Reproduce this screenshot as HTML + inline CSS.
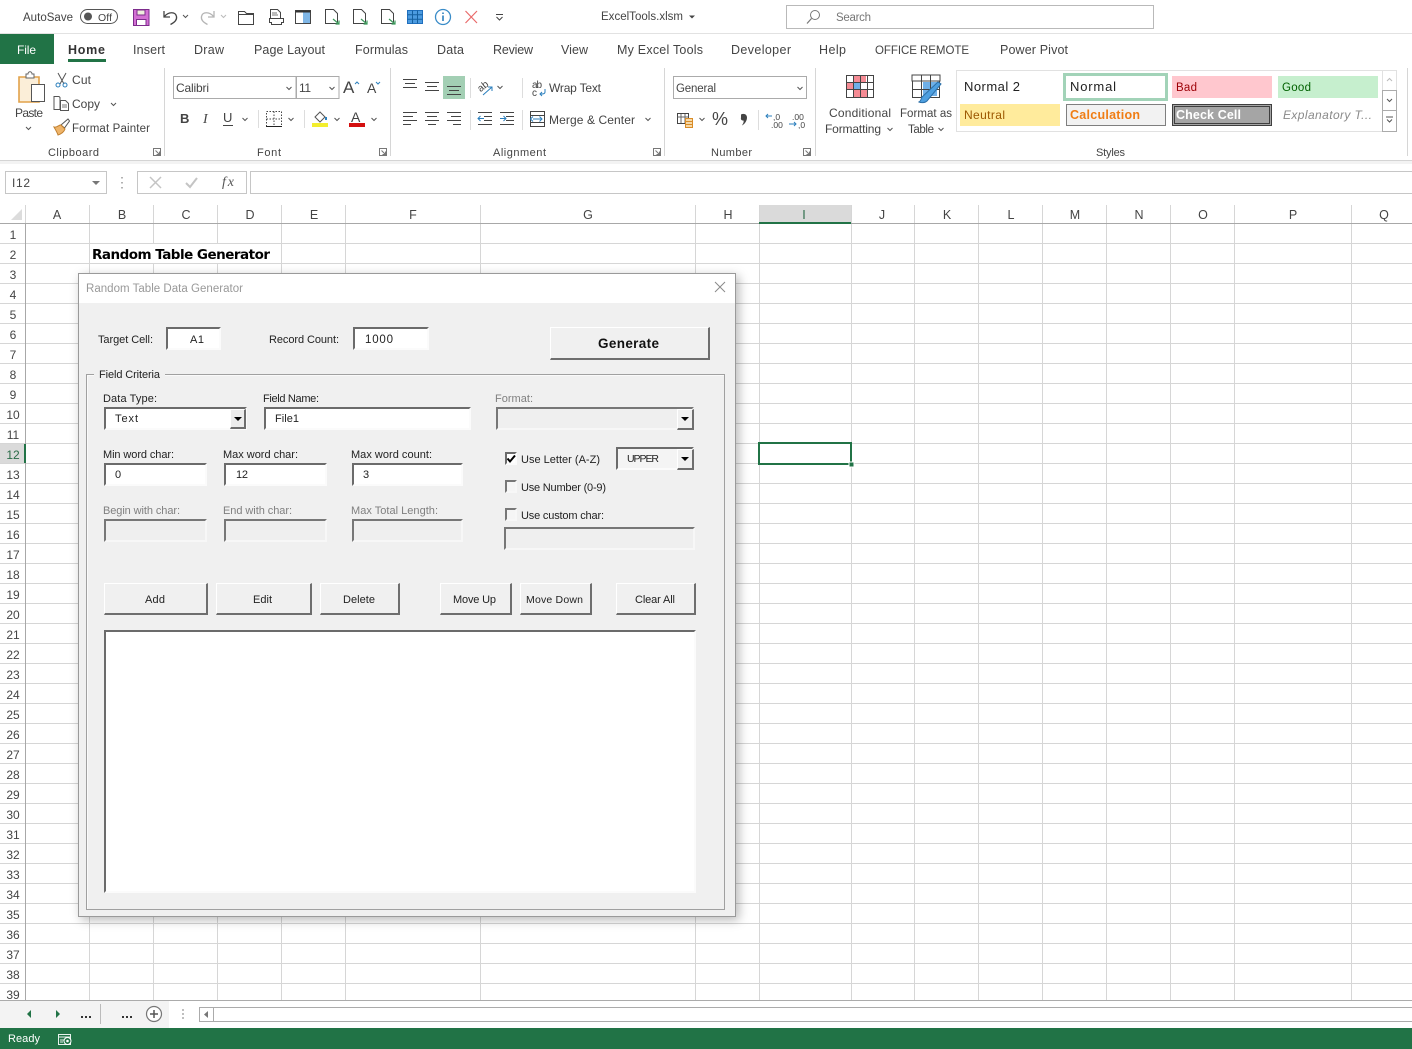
<!DOCTYPE html>
<html lang="en"><head><meta charset="utf-8"><title>ExcelTools.xlsm</title>
<style>
html,body{margin:0;padding:0;background:#fff;width:1412px;height:1049px;overflow:hidden}
#p{position:relative;width:1412px;height:1049px;overflow:hidden}
svg{position:absolute;left:0;top:0}
text{font-family:"Liberation Sans",sans-serif;font-size:12px;fill:#444}
.h text{fill:#444;font-size:12.5px}
.d text{font-size:11px;fill:#222}
.g{fill:#808080!important}
.c{fill:none;stroke:#555;stroke-width:1}
.l{fill:none;stroke:#444;stroke-width:1}
.b{position:absolute;box-sizing:border-box}
.s{border:2px solid;border-color:#6b6b6b #fbfbfb #fbfbfb #6b6b6b;background:#fff}
.x{border:2px solid;border-color:#777 #f7f7f7 #f7f7f7 #777;background:#efefef}
.r{border:1px solid #fff;border-right:2px solid #6e6e6e;border-bottom:2px solid #6e6e6e;background:#f0f0f0}
</style></head><body><div id="p">
<svg width="1412" height="1049" viewBox="0 0 1412 1049">
<!-- title bar -->
<text x="23" y="21" textLength="50" style="font-size:11.500px">AutoSave</text>
<rect x="80.500" y="9.500" width="37" height="14" rx="7" fill="#fff" stroke="#555"/><circle cx="88" cy="16.500" r="4" fill="#555"/>
<text x="98" y="21" textLength="14" style="font-size:10.500px">Off</text>
<path d="M133.500 9.500h15.500v16h-15.500z" fill="#d36fd3" stroke="#7d2c8c"/><path d="M137 10h8v5h-8z" fill="#eed" stroke="#7d2c8c"/><path d="M136.500 19.500h9.500v6h-9.500z" fill="#fff" stroke="#7d2c8c"/>
<path d="M164 11v6h6M164.500 16.500c4-5 11-5 12 0 .8 4-3 6.500-6 8" fill="none" stroke="#444" stroke-width="1.300"/><path class="c" d="M183 15l2.500 2.500 2.500-2.500"/>
<path d="M214 11v6h-6M213.500 16.500c-4-5-11-5-12 0-.8 4 3 6.500 6 8" fill="none" stroke="#b5b5b5" stroke-width="1.300"/><path class="c" style="stroke:#bbb" d="M221 15l2.500 2.500 2.500-2.500"/>
<path d="M238.500 11.500h6l2 2h7v11h-15z" fill="#fff" stroke="#444"/><path d="M238.500 14.500h15" stroke="#444"/>
<path d="M270.500 9.500h7l3 3v6h-10z" fill="#fff" stroke="#444"/><path d="M269.500 18.500h14v4h-2v2h-10v-2h-2z" fill="#fff" stroke="#444"/><path d="M272 13h5M272 15h6" stroke="#777"/>
<rect x="295.500" y="10.500" width="15" height="13" fill="#fff" stroke="#444"/><rect x="303" y="12" width="7" height="11" fill="#7fb6e6"/><path d="M295.500 11.500h15" stroke="#333" stroke-width="2"/>
<g fill="#fff" stroke="#444"><path d="M325.500 9.500h8l4 4v10h-12z"/><path d="M353.500 9.500h8l4 4v10h-12z"/><path d="M381.500 9.500h8l4 4v10h-12z"/></g>
<g fill="none" stroke="#3d9a5c" stroke-width="1.200"><path d="M333 19l6 5m0-3.500v3.500h-3.500"/><path d="M361 19l6 5m0-3.500v3.500h-3.500"/><path d="M389 19l6 5m0-3.500v3.500h-3.500"/></g>
<rect x="407.500" y="10.500" width="15" height="13" fill="#4c9be0" stroke="#1f6fbe"/><path d="M407.500 14.800h15M407.500 19.200h15M412.500 10.500v13M417.500 10.500v13" stroke="#155f9f"/>
<circle cx="443" cy="17" r="7.500" fill="#fff" stroke="#3a8cc8" stroke-width="1.300"/><path d="M443 15.500v5.500M443 12.500v1.500" stroke="#2b7fbd" stroke-width="1.600"/>
<path d="M465.500 11l11.500 12M477 11l-11.500 12" stroke="#e96a6a" stroke-width="1.200"/>
<path d="M496 14.500h7M496.500 17l3 3 3-3" fill="none" stroke="#444"/>
<text x="601" y="20" textLength="82" style="font-size:11.500px">ExcelTools.xlsm</text><path d="M689 15.500h6l-3 3z" fill="#444"/>
<rect x="786.500" y="5.500" width="367" height="23" fill="#fff" stroke="#b9b9b9"/>
<circle cx="815" cy="15" r="4.500" fill="none" stroke="#777"/><path d="M811.500 18.500l-4.500 5" stroke="#777" stroke-width="1.200"/>
<text x="836" y="21" textLength="35" style="fill:#777;font-size:11.500px">Search</text>
<path d="M0 33.500h1412" stroke="#e2e2e2"/>
<!-- tabs -->
<rect x="0" y="34" width="54" height="30" fill="#217346"/><text x="17" y="54" textLength="19" style="fill:#fff">File</text>
<g class="h"><text x="68" y="54" textLength="37" style="fill:#333;font-weight:bold;font-size:12.500px">Home</text>
<text x="133" y="54" textLength="32">Insert</text><text x="194" y="54" textLength="30">Draw</text><text x="254" y="54" textLength="71">Page Layout</text><text x="355" y="54" textLength="53">Formulas</text><text x="437" y="54" textLength="27">Data</text><text x="493" y="54" textLength="40">Review</text><text x="561" y="54" textLength="27">View</text><text x="617" y="54" textLength="86">My Excel Tools</text><text x="731" y="54" textLength="60">Developer</text><text x="819" y="54" textLength="27">Help</text><text x="875" y="54" textLength="94" style="font-size:11.500px">OFFICE REMOTE</text><text x="1000" y="54" textLength="68">Power Pivot</text></g>
<rect x="68" y="59" width="38" height="3" fill="#217346"/>
<!-- ribbon separators -->
<path d="M164.500 68v88M390.500 68v88M664.500 68v88M815.500 68v88M1407.500 68v88" stroke="#d6d6d6"/>
<path d="M0 160.500h1412" stroke="#d4d4d4"/><rect x="0" y="161" width="1412" height="3" fill="#f3f3f3"/>
<g fill="none" stroke="#777"><path d="M153.500 148.500h7v7h-7zM155.500 150.500l4 4m0-3v3h-3"/><path d="M379.500 148.500h7v7h-7zM381.500 150.500l4 4m0-3v3h-3"/><path d="M653.500 148.500h7v7h-7zM655.500 150.500l4 4m0-3v3h-3"/><path d="M803.500 148.500h7v7h-7zM805.500 150.500l4 4m0-3v3h-3"/></g>
<!-- clipboard -->
<path d="M19 77h20v25h-20z" fill="#fbeed8" stroke="#e2a24a" stroke-width="1.600"/><path d="M26 77v-3h2c0-3 4-3 4 0h2v3v1h-8z" fill="#fff" stroke="#666"/>
<rect x="31.500" y="84.500" width="13" height="17" fill="#fff" stroke="#555"/>
<text x="15" y="117" textLength="28">Paste</text><path class="c" d="M26 127l2.500 2.500 2.500-2.500"/>
<path d="M58 73l6 11M66 73l-6 11" fill="none" stroke="#555"/><circle cx="58" cy="85" r="2" fill="none" stroke="#2b7fbd"/><circle cx="65" cy="85" r="2" fill="none" stroke="#2b7fbd"/>
<text x="72" y="84" textLength="19">Cut</text>
<path d="M54 96.500h5l1 1v12h-6z" fill="#fff" stroke="#555"/><path d="M60.500 100.500h5l3 3v7h-8z" fill="#fff" stroke="#555"/><path d="M62 105h5M62 107h5" stroke="#777"/>
<text x="72" y="108" textLength="28">Copy</text><path class="c" d="M111 103l2.500 2.500 2.500-2.500"/>
<path d="M61 125l7-6 1.500 2-5 7z" fill="#fff" stroke="#555"/><path d="M54 127c3 1 6-3 7-2l4 4c-1 3-4 5-7 6-1-3-3-6-4-8z" fill="#eeb46a" stroke="#c07f2e"/>
<text x="72" y="132" textLength="78" style="font-size:11.500px">Format Painter</text>
<text x="48" y="156" textLength="51" style="font-size:11px">Clipboard</text>
<!-- font -->
<rect x="173.500" y="76.500" width="122.500" height="22" fill="#fff" stroke="#ababab"/><rect x="296.500" y="76.500" width="42.500" height="22" fill="#fff" stroke="#ababab"/>
<text x="176" y="92" textLength="33">Calibri</text><text x="299" y="92" textLength="12">11</text>
<path class="c" d="M286.500 87l2.500 2.500 2.500-2.500M329.500 87l2.500 2.500 2.500-2.500"/>
<text x="343" y="93" style="font-size:17px" textLength="12">A</text><path class="c" d="M355 84l2-2 2 2" style="stroke:#2b7fbd"/>
<text x="367" y="93" style="font-size:14px" textLength="10">A</text><path class="c" d="M376 82l2 2 2-2" style="stroke:#2b7fbd"/>
<text x="180" y="123" style="font-weight:bold;font-size:13px">B</text><text x="203" y="123" style="font-style:italic;font-family:'Liberation Serif',serif;font-size:14px">I</text><text x="223" y="122" style="font-size:13px">U</text><path d="M223 125.500h10" stroke="#444"/><path class="c" d="M242.500 118l2.500 2.500 2.500-2.500"/>
<path d="M258.500 110v18M304.500 110v18" stroke="#ddd"/>
<path d="M266.500 111.500h15v15h-15zM274 111.500v15M266.500 119h15" fill="none" stroke="#444" stroke-dasharray="1.500 1.500"/><path d="M266 126.500h16" stroke="#222"/><path class="c" d="M288.500 118l2.500 2.500 2.500-2.500"/>
<path d="M315 117l5-5 5 5-5 5z" fill="#fff" stroke="#555"/><path d="M326 117v3" stroke="#2b7fbd" stroke-width="2"/><rect x="312" y="123" width="16" height="4" fill="#f3ee2e"/><path class="c" d="M334.500 118l2.500 2.500 2.500-2.500"/>
<text x="351" y="122" style="font-size:14px" textLength="12">A</text><rect x="349" y="123" width="16" height="4" fill="#d40f0f"/><path class="c" d="M371.500 118l2.500 2.500 2.500-2.500"/>
<text x="257" y="156" textLength="24" style="font-size:11px">Font</text>
<!-- alignment -->
<rect x="443" y="76" width="22" height="23" fill="#a3cfb4"/>
<path class="l" d="M403 79.500h14M405 83.500h10M403 87.500h14M425 82.500h14M427 86.500h10M425 90.500h14M447 86.500h14M449 90.500h10M447 94.500h14"/>
<path class="l" d="M403 112.500h14M403 116.500h10M403 120.500h14M403 124.500h8M425 112.500h14M427 116.500h10M425 120.500h14M428 124.500h8M447 112.500h14M451 116.500h10M447 120.500h14M453 124.500h8"/>
<path d="M470.500 78v20M470.500 110v20M522.500 78v20M522.500 110v20" stroke="#ddd"/>
<text x="477" y="90" transform="rotate(-38 482 86)" style="font-size:10px">ab</text><path d="M483 95l9-8m-4 0h4v4" fill="none" stroke="#2b7fbd"/><path class="c" d="M497.500 86l2.500 2.500 2.500-2.500"/>
<path class="l" d="M478 112.500h14M484 116.500h8M484 120.500h8M478 124.500h14M500 112.500h14M506 116.500h8M506 120.500h8M500 124.500h14"/>
<path d="M484 118.500h-6m2.500-2.500l-2.500 2.500 2.500 2.500M500 118.500h6m-2.500-2.500l2.500 2.500-2.500 2.500" fill="none" stroke="#2b7fbd"/>
<text x="532" y="88" style="font-size:10px" textLength="10">ab</text><text x="532" y="96" style="font-size:10px">c</text><path d="M545 89v3c0 2-2 2-5 2m2-2l-2 2 2 2" fill="none" stroke="#2b7fbd"/>
<text x="549" y="92" textLength="52">Wrap Text</text>
<rect x="530.500" y="111.500" width="14" height="15" fill="#fff" stroke="#444"/><path d="M531 115.500h13M531 122.500h13" stroke="#444"/><path d="M533 119h9m-2.500-2.500l2.500 2.500-2.500 2.500m-6.500-5l-2.500 2.500 2.500 2.500" fill="none" stroke="#2b7fbd"/>
<text x="549" y="124" textLength="86">Merge &amp; Center</text><path class="c" d="M645.500 118l2.500 2.500 2.500-2.500"/>
<text x="493" y="156" textLength="53" style="font-size:11px">Alignment</text>
<!-- number -->
<rect x="673.500" y="76.500" width="133" height="22" fill="#fff" stroke="#ababab"/><text x="676" y="92" textLength="40" style="font-size:11.500px">General</text><path class="c" d="M797.500 87l2.500 2.500 2.500-2.500"/>
<rect x="677.500" y="113.500" width="11" height="10" fill="#fff" stroke="#444"/><path d="M677.500 117h11M681 114v9M685 114v9" stroke="#666"/><rect x="685.500" y="118.500" width="7" height="9" fill="#f6d9a8" stroke="#d98c27"/><path d="M686 121.500h6M686 124.500h6" stroke="#d98c27"/><path class="c" d="M699.500 118l2.500 2.500 2.500-2.500"/>
<text x="712" y="125" style="font-size:18px" textLength="17">%</text><path d="M741 114.500c3-1.500 6 0 6 3 0 4-3 7-5 8 1-2 2-3 1.500-5-2 0-3-1-2.500-3z" fill="#444"/>
<path d="M758.500 110v20" stroke="#ddd"/>
<text x="773" y="120" style="font-size:8.500px">,0</text><text x="771" y="128" style="font-size:8.500px">.00</text><path d="M772 116h-6m2-2l-2 2 2 2" fill="none" stroke="#2b7fbd"/>
<text x="792" y="120" style="font-size:8.500px">.00</text><text x="798" y="128" style="font-size:8.500px">,0</text><path d="M789 124h7m-2-2l2 2-2 2" fill="none" stroke="#2b7fbd"/>
<text x="711" y="156" textLength="41" style="font-size:11px">Number</text>
<!-- cond format -->
<rect x="846.500" y="75.500" width="27" height="22" fill="#fff" stroke="#444"/><rect x="853" y="76" width="13" height="6" fill="#f58b94"/><rect x="847" y="82" width="6" height="8" fill="#f58b94"/><rect x="853" y="83" width="7" height="6" fill="#6fb0e8"/><rect x="853" y="90" width="14" height="7" fill="#f58b94"/>
<path d="M846.500 82.500h27M846.500 89.500h27M853.500 75.500v22M860.500 75.500v22M867.500 75.500v22" stroke="#444"/>
<text x="829" y="117" textLength="62">Conditional</text><text x="825" y="133" textLength="56">Formatting</text><path class="c" d="M887.500 128l2.500 2.500 2.500-2.500"/>
<rect x="912.500" y="75.500" width="27" height="22" fill="#fff" stroke="#444"/><rect x="912" y="75" width="28" height="6" fill="#fff" stroke="#444"/><rect x="923" y="82" width="14" height="14" fill="#6fb0e8"/><path d="M912.500 89.500h27M921.500 75.500v22M930.500 75.500v22" stroke="#444"/>
<path d="M922 97l16-15 3 2-14 17c-2 2-6 2-8 1 2-1 2-3 3-5z" fill="#4d9fe0" stroke="#2b6fa8"/>
<text x="900" y="117" textLength="52" style="font-size:11.500px">Format as</text><text x="908" y="133" textLength="26" style="font-size:11.500px">Table</text><path class="c" d="M938.500 128l2.500 2.500 2.500-2.500"/>
<!-- styles -->
<rect x="956.500" y="70.500" width="440" height="61" fill="#fff" stroke="#e1e1e1"/>
<rect x="1382.500" y="70.500" width="14" height="20" fill="#fff" stroke="#e1e1e1"/><rect x="1382.500" y="90.500" width="14" height="20" fill="#fff" stroke="#ababab"/><rect x="1382.500" y="110.500" width="14" height="21" fill="#fff" stroke="#ababab"/>
<path class="c" d="M1387 81l2.500-2.500 2.500 2.500" style="stroke:#bbb"/><path class="c" d="M1387 99l2.500 2.500 2.500-2.500"/><path class="c" d="M1386 117h7M1387 119.500l2.500 2.500 2.500-2.500"/>
<text x="964" y="91" textLength="56" style="font-size:13px;fill:#222">Normal 2</text>
<rect x="1064.500" y="74.500" width="102" height="25" fill="#fff" stroke="#a2d3b8" stroke-width="3"/><text x="1070" y="91" textLength="46" style="font-size:13px;fill:#222">Normal</text>
<rect x="1172" y="76" width="100" height="22" fill="#ffc7ce"/><text x="1176" y="91" textLength="21" style="fill:#9c0006;font-size:11.500px">Bad</text>
<rect x="1278" y="76" width="100" height="22" fill="#c6efce"/><text x="1282" y="91" textLength="29" style="fill:#006100;font-size:11.500px">Good</text>
<rect x="960" y="104" width="100" height="22" fill="#ffeb9c"/><text x="964" y="119" textLength="41" style="fill:#9c5700">Neutral</text>
<rect x="1066.500" y="104.500" width="99" height="21" fill="#f2f2f2" stroke="#7f7f7f"/><text x="1070" y="119" textLength="70" style="fill:#f07d14;font-weight:bold;font-size:12.500px">Calculation</text>
<rect x="1172.500" y="104.500" width="99" height="21" fill="#a5a5a5" stroke="#3f3f3f"/><rect x="1174.500" y="106.500" width="95" height="17" fill="none" stroke="#3f3f3f"/><text x="1176" y="119" textLength="65" style="fill:#fff;font-weight:bold;font-size:12.500px">Check Cell</text>
<text x="1283" y="119" textLength="89" style="fill:#8a8a8a;font-style:italic">Explanatory T...</text>
<text x="1096" y="156" textLength="29" style="font-size:11px">Styles</text>
<!-- formula bar -->
<rect x="5.500" y="171.500" width="101" height="22" fill="#fff" stroke="#c6c6c6"/><text x="12" y="187" textLength="18">I12</text><path d="M92 181h8l-4 4z" fill="#777"/>
<path d="M122 177v1.500M122 182v1.500M122 187v1.500" stroke="#999" stroke-width="1.500"/>
<rect x="137.500" y="171.500" width="109" height="22" fill="#fff" stroke="#c6c6c6"/><path d="M150 177l11 11M161 177l-11 11" stroke="#c4c4c4" stroke-width="1.500"/><path d="M186 183l4 4 7-9" fill="none" stroke="#c4c4c4" stroke-width="2"/>
<text x="222" y="186" style="font-style:italic;font-family:'Liberation Serif',serif;font-size:14px;fill:#555" textLength="12">fx</text>
<rect x="250.500" y="171.500" width="1170" height="22" fill="#fff" stroke="#c6c6c6"/>
<!-- grid -->
<path d="M22 209v11h-11z" fill="#dcdcdc"/>
<rect x="759" y="205" width="92" height="18" fill="#dadada"/><rect x="0" y="444" width="25" height="19" fill="#dadada"/>
<g id="rows" stroke="#d6d6d6">
<path d="M0 223.500H1412M0 243.500H1412M0 263.500H1412M0 283.500H1412M0 303.500H1412M0 323.500H1412M0 343.500H1412M0 363.500H1412M0 383.500H1412M0 403.500H1412M0 423.500H1412M0 443.500H1412M0 463.500H1412M0 483.500H1412M0 503.500H1412M0 523.500H1412M0 543.500H1412M0 563.500H1412M0 583.500H1412M0 603.500H1412M0 623.500H1412M0 643.500H1412M0 663.500H1412M0 683.500H1412M0 703.500H1412M0 723.500H1412M0 743.500H1412M0 763.500H1412M0 783.500H1412M0 803.500H1412M0 823.500H1412M0 843.500H1412M0 863.500H1412M0 883.500H1412M0 903.500H1412M0 923.500H1412M0 943.500H1412M0 963.500H1412M0 983.500H1412"/>
<path d="M25.500 205V1000M89.500 205V1000M153.500 205V1000M217.500 205V1000M281.500 205V1000M345.500 205V1000M480.500 205V1000M695.500 205V1000M759.500 205V1000M851.500 205V1000M914.500 205V1000M978.500 205V1000M1042.500 205V1000M1106.500 205V1000M1170.500 205V1000M1234.500 205V1000M1351.500 205V1000"/>
</g>
<path d="M0 223.500H759M851 223.500H1412" stroke="#a8a8a8"/><path d="M25.500 223V444M25.500 463V1000" stroke="#a8a8a8"/>
<rect x="759" y="222" width="92" height="2" fill="#217346"/><rect x="24" y="444" width="2" height="19" fill="#217346"/>
<g text-anchor="middle" style="font-size:12.500px">
<text x="57" y="219" style="font-size:12.500px">A</text><text x="122" y="219" style="font-size:12.500px">B</text><text x="186" y="219" style="font-size:12.500px">C</text><text x="250" y="219" style="font-size:12.500px">D</text><text x="314" y="219" style="font-size:12.500px">E</text><text x="413" y="219" style="font-size:12.500px">F</text><text x="588" y="219" style="font-size:12.500px">G</text><text x="728" y="219" style="font-size:12.500px">H</text><text x="804" y="219" style="fill:#2a6b48;font-size:12.500px">I</text><text x="882" y="219" style="font-size:12.500px">J</text><text x="947" y="219" style="font-size:12.500px">K</text><text x="1011" y="219" style="font-size:12.500px">L</text><text x="1075" y="219" style="font-size:12.500px">M</text><text x="1139" y="219" style="font-size:12.500px">N</text><text x="1203" y="219" style="font-size:12.500px">O</text><text x="1293" y="219" style="font-size:12.500px">P</text><text x="1384" y="219" style="font-size:12.500px">Q</text>
<text x="13" y="239">1</text><text x="13" y="259">2</text><text x="13" y="279">3</text><text x="13" y="299">4</text><text x="13" y="319">5</text><text x="13" y="339">6</text><text x="13" y="359">7</text><text x="13" y="379">8</text><text x="13" y="399">9</text><text x="13" y="419">10</text><text x="13" y="439">11</text><text x="13" y="459" style="fill:#2a6b48">12</text><text x="13" y="479">13</text><text x="13" y="499">14</text><text x="13" y="519">15</text><text x="13" y="539">16</text><text x="13" y="559">17</text><text x="13" y="579">18</text><text x="13" y="599">19</text><text x="13" y="619">20</text><text x="13" y="639">21</text><text x="13" y="659">22</text><text x="13" y="679">23</text><text x="13" y="699">24</text><text x="13" y="719">25</text><text x="13" y="739">26</text><text x="13" y="759">27</text><text x="13" y="779">28</text><text x="13" y="799">29</text><text x="13" y="819">30</text><text x="13" y="839">31</text><text x="13" y="859">32</text><text x="13" y="879">33</text><text x="13" y="899">34</text><text x="13" y="919">35</text><text x="13" y="939">36</text><text x="13" y="959">37</text><text x="13" y="979">38</text><text x="13" y="999">39</text>
</g>
<rect x="91" y="244" width="189" height="19" fill="#fff"/>
<text x="92" y="259" textLength="178" style="font-family:'DejaVu Sans',sans-serif;font-weight:bold;font-size:13.500px;fill:#000">Random Table Generator</text>
<rect x="759" y="443" width="92" height="21" fill="none" stroke="#217346" stroke-width="2"/><rect x="849" y="462" width="5" height="5" fill="#217346" stroke="#fff"/>
<!-- bottom -->
<rect x="0" y="1001" width="1412" height="27" fill="#fff"/><rect x="0" y="1001" width="169" height="27" fill="#f3f3f3"/><path d="M0 1000.500H1412" stroke="#ababab"/>
<path d="M31 1010v8l-4-4zM56 1010v8l4-4z" fill="#217346"/>
<g fill="#333"><rect x="81" y="1016" width="2" height="2"/><rect x="85" y="1016" width="2" height="2"/><rect x="89" y="1016" width="2" height="2"/><rect x="122" y="1016" width="2" height="2"/><rect x="126" y="1016" width="2" height="2"/><rect x="130" y="1016" width="2" height="2"/></g>
<path d="M100.500 1004v20" stroke="#bbb"/>
<circle cx="154" cy="1014" r="7.500" fill="#fff" stroke="#777" stroke-width="1.200"/><path d="M150 1014h8M154 1010v8" stroke="#555" stroke-width="1.500"/>
<path d="M183 1009v2M183 1013v2M183 1017v2" stroke="#aaa" stroke-width="1.500"/>
<rect x="199.500" y="1007.500" width="1220" height="14" fill="#fff" stroke="#ababab"/><path d="M213.500 1008v13" stroke="#ababab"/><path d="M208 1011v7l-4-3.500z" fill="#777"/>
<rect x="0" y="1028" width="1412" height="21" fill="#217346"/>
<text x="8" y="1042" textLength="32" style="fill:#fff;font-size:11px">Ready</text>
<rect x="58.500" y="1034.500" width="12" height="10" fill="none" stroke="#e8f2ec"/><path d="M58.500 1037h12M60 1040h4M60 1042h3" stroke="#e8f2ec"/><circle cx="67.500" cy="1041" r="3.500" fill="#217346" stroke="#fff"/><circle cx="67.500" cy="1041" r="1.300" fill="#fff"/>
</svg>

<!-- dialog -->
<div class="b" style="left:78px;top:273px;width:658px;height:644px;background:#f0f0f0;border:1px solid #9a9a9a;box-shadow:3px 3px 10px rgba(0,0,0,.28)"></div>
<div class="b" style="left:79px;top:274px;width:656px;height:29px;background:#fff"></div>
<div class="b" style="left:86px;top:374px;width:639px;height:536px;border:1px solid #a0a0a0;box-shadow:inset 1px 1px 0 #fafafa"></div>
<div class="b" style="left:94px;top:368px;width:71px;height:12px;background:#f0f0f0"></div>
<div class="b s" style="left:166px;top:327px;width:55px;height:23px"></div>
<div class="b s" style="left:353px;top:327px;width:76px;height:23px"></div>
<div class="b r" style="left:550px;top:327px;width:160px;height:33px"></div>
<div class="b s" style="left:104px;top:407px;width:143px;height:23px"></div>
<div class="b r" style="left:230px;top:409px;width:16px;height:20px;background:#ececec"></div>
<div class="b s" style="left:264px;top:407px;width:207px;height:23px"></div>
<div class="b x" style="left:496px;top:407px;width:198px;height:23px"></div>
<div class="b r" style="left:677px;top:409px;width:17px;height:21px"></div>
<div class="b s" style="left:104px;top:463px;width:103px;height:23px"></div>
<div class="b s" style="left:224px;top:463px;width:103px;height:23px"></div>
<div class="b s" style="left:352px;top:463px;width:111px;height:23px"></div>
<div class="b x" style="left:104px;top:519px;width:103px;height:23px"></div>
<div class="b x" style="left:224px;top:519px;width:103px;height:23px"></div>
<div class="b x" style="left:352px;top:519px;width:111px;height:23px"></div>
<div class="b s" style="left:505px;top:452px;width:12px;height:13px"></div>
<div class="b x" style="left:505px;top:480px;width:12px;height:13px;background:#f5f5f5"></div>
<div class="b x" style="left:505px;top:508px;width:12px;height:13px;background:#f5f5f5"></div>
<div class="b s" style="left:616px;top:447px;width:78px;height:23px;background:#f4f4f4"></div>
<div class="b r" style="left:677px;top:449px;width:17px;height:21px"></div>
<div class="b x" style="left:504px;top:527px;width:191px;height:23px"></div>
<div class="b r" style="left:104px;top:583px;width:104px;height:32px"></div>
<div class="b r" style="left:216px;top:583px;width:96px;height:32px"></div>
<div class="b r" style="left:320px;top:583px;width:80px;height:32px"></div>
<div class="b r" style="left:440px;top:583px;width:72px;height:32px"></div>
<div class="b r" style="left:520px;top:583px;width:72px;height:32px"></div>
<div class="b r" style="left:616px;top:583px;width:80px;height:32px"></div>
<div class="b s" style="left:104px;top:630px;width:592px;height:263px"></div>

<svg class="d" width="1412" height="1049" viewBox="0 0 1412 1049">
<text x="86" y="292" textLength="157" style="fill:#999;font-size:11.500px">Random Table Data Generator</text>
<path d="M715 282l10 10M725 282l-10 10" stroke="#8a8a8a"/>
<text x="98" y="343" textLength="55">Target Cell:</text><text x="190" y="343" textLength="14">A1</text>
<text x="269" y="343" textLength="70">Record Count:</text><text x="365" y="343" textLength="28" style="font-size:11.500px">1000</text>
<text x="598" y="348" textLength="61" style="font-weight:bold;font-size:13.500px;fill:#111">Generate</text>
<text x="99" y="378" textLength="61">Field Criteria</text>
<text x="103" y="402" textLength="54">Data Type:</text><text x="115" y="422" textLength="23">Text</text>
<text x="263" y="402" textLength="56">Field Name:</text><text x="275" y="422" textLength="24">File1</text>
<text x="495" y="402" textLength="38" class="g">Format:</text>
<path d="M234 417h8l-4 4z M681 417h8l-4 4z M681 457h8l-4 4z" fill="#000"/>
<text x="103" y="458" textLength="71">Min word char:</text><text x="115" y="478" textLength="7">0</text>
<text x="223" y="458" textLength="75">Max word char:</text><text x="236" y="478" textLength="12">12</text>
<text x="351" y="458" textLength="81">Max word count:</text><text x="363" y="478" textLength="7">3</text>
<text x="103" y="514" textLength="77" class="g">Begin with char:</text><text x="223" y="514" textLength="69" class="g">End with char:</text><text x="351" y="514" textLength="87" class="g">Max Total Length:</text>
<path d="M507.500 458.500l2.500 3 5-6" fill="none" stroke="#000" stroke-width="2"/>
<text x="521" y="463" textLength="79">Use Letter (A-Z)</text><text x="627" y="462" textLength="32" style="font-size:10.500px">UPPER</text>
<text x="521" y="491" textLength="85">Use Number (0-9)</text><text x="521" y="519" textLength="83">Use custom char:</text>
<text x="145" y="603" textLength="20">Add</text><text x="253" y="603" textLength="19">Edit</text><text x="343" y="603" textLength="32">Delete</text><text x="453" y="603" textLength="43">Move Up</text><text x="526" y="603" textLength="57" style="font-size:10.500px">Move Down</text><text x="635" y="603" textLength="40">Clear All</text>
</svg>
</div></body></html>
